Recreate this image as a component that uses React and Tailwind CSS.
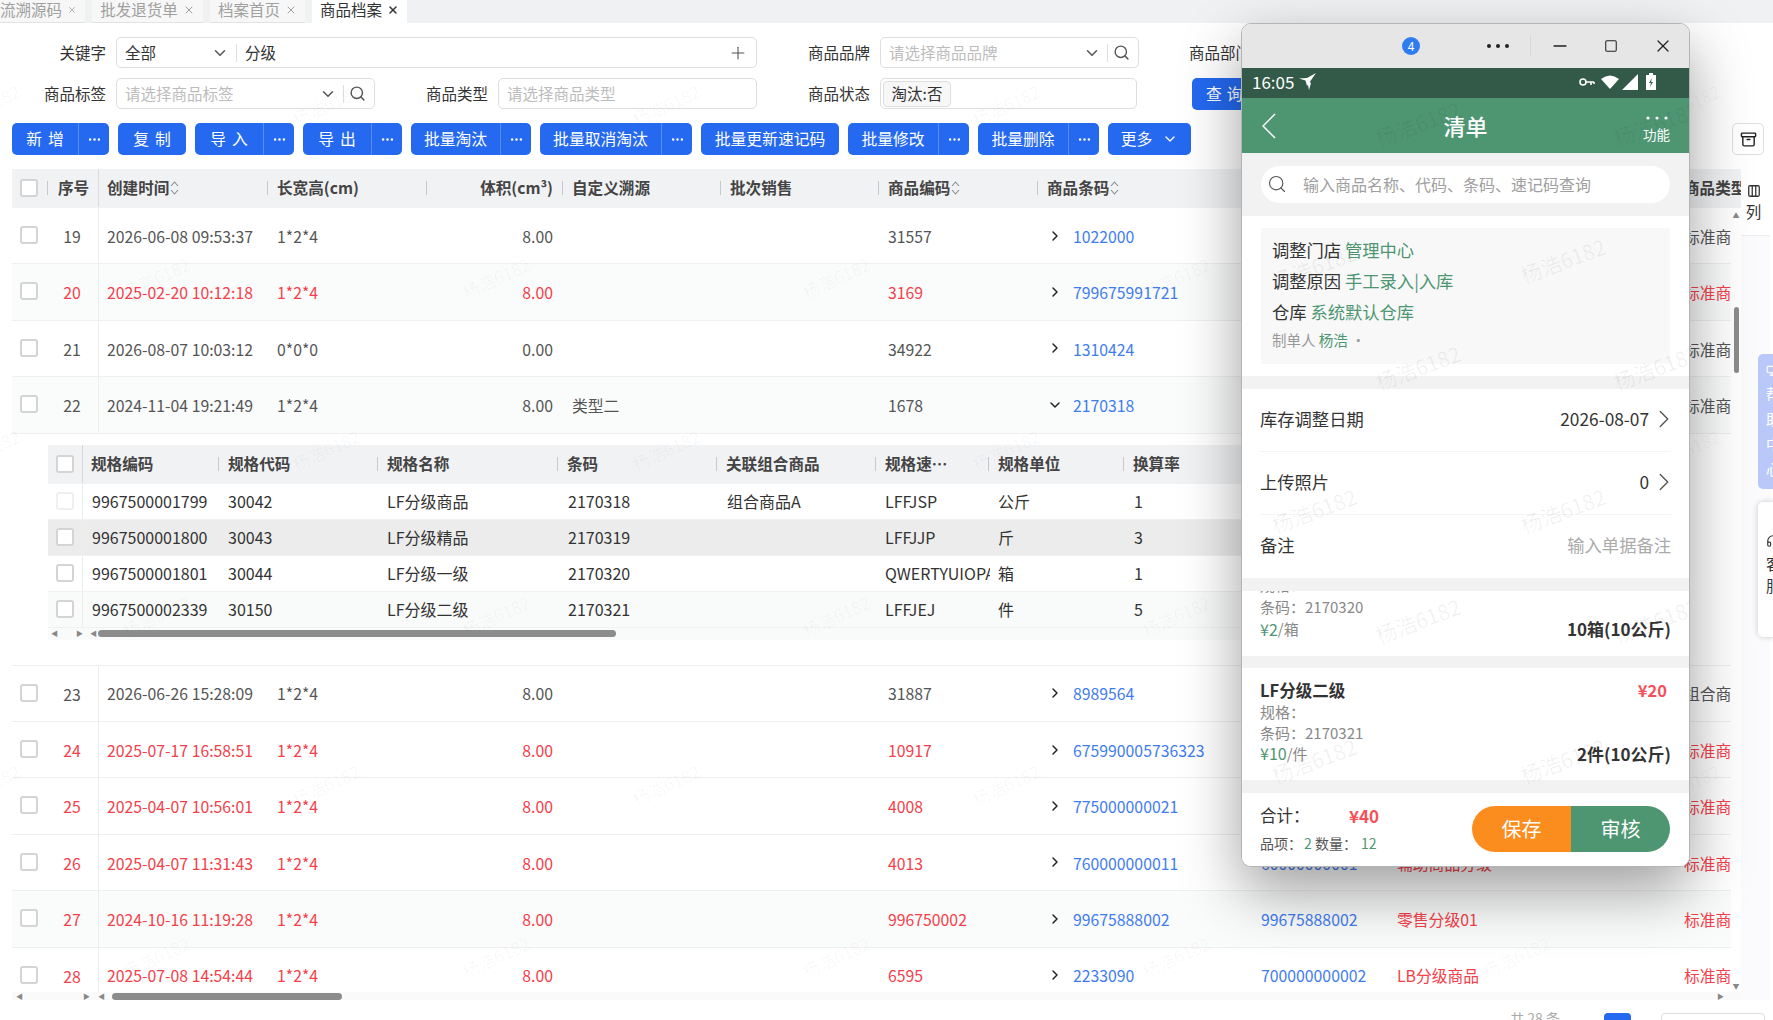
import { ChevronDown, ChevronRight, Search, Plus, Ellipsis, Minus, Square, X, Archive, Columns3, Headphones, MonitorSmartphone } from 'lucide-react';

const font = { fontFamily: '"Noto Sans CJK SC", "Noto Sans", sans-serif' };

const mainCols = 'grid w-max grid-cols-[87px_170px_159px_136px_158px_158px_159px_214px_136px_287px_110px]';
const subCols = 'grid w-[1630px] grid-cols-[35px_137px_159px_180px_159px_159px_113px_135px_553px]';

const rowsTop = [
    { no: 19, time: '2026-06-08 09:53:37', size: '1*2*4', vol: '8.00', custom: '', code: '31557', bar: '1022000', bar2: '', name: '', type: '标准商' },
    { no: 20, red: true, time: '2025-02-20 10:12:18', size: '1*2*4', vol: '8.00', custom: '', code: '3169', bar: '799675991721', bar2: '', name: '', type: '标准商' },
    { no: 21, time: '2026-08-07 10:03:12', size: '0*0*0', vol: '0.00', custom: '', code: '34922', bar: '1310424', bar2: '', name: '', type: '标准商' },
    { no: 22, open: true, time: '2024-11-04 19:21:49', size: '1*2*4', vol: '8.00', custom: '类型二', code: '1678', bar: '2170318', bar2: '', name: '', type: '标准商' },
];

const rowsBottom = [
    { no: 23, time: '2026-06-26 15:28:09', size: '1*2*4', vol: '8.00', custom: '', code: '31887', bar: '8989564', bar2: '', name: '', type: '组合商' },
    { no: 24, red: true, time: '2025-07-17 16:58:51', size: '1*2*4', vol: '8.00', custom: '', code: '10917', bar: '675990005736323', bar2: '', name: '', type: '标准商' },
    { no: 25, red: true, time: '2025-04-07 10:56:01', size: '1*2*4', vol: '8.00', custom: '', code: '4008', bar: '775000000021', bar2: '', name: '', type: '标准商' },
    { no: 26, red: true, time: '2025-04-07 11:31:43', size: '1*2*4', vol: '8.00', custom: '', code: '4013', bar: '760000000011', bar2: '60000000001', name: '辅助商品分级', type: '标准商' },
    { no: 27, red: true, time: '2024-10-16 11:19:28', size: '1*2*4', vol: '8.00', custom: '', code: '996750002', bar: '99675888002', bar2: '99675888002', name: '零售分级01', type: '标准商' },
    { no: 28, red: true, time: '2025-07-08 14:54:44', size: '1*2*4', vol: '8.00', custom: '', code: '6595', bar: '2233090', bar2: '700000000002', name: 'LB分级商品', type: '标准商' },
];

const subRows = [
    { code: '9967500001799', c2: '30042', name: 'LF分级商品', bar: '2170318', combo: '组合商品A', memo: 'LFFJSP', unit: '公斤', rate: '1', bg: 'bg-white', light: true },
    { code: '9967500001800', c2: '30043', name: 'LF分级精品', bar: '2170319', combo: '', memo: 'LFFJJP', unit: '斤', rate: '3', bg: 'bg-[#ececec]' },
    { code: '9967500001801', c2: '30044', name: 'LF分级一级', bar: '2170320', combo: '', memo: 'QWERTYUIOPASD', unit: '箱', rate: '1', bg: 'bg-white' },
    { code: '9967500002339', c2: '30150', name: 'LF分级二级', bar: '2170321', combo: '', memo: 'LFFJEJ', unit: '件', rate: '5', bg: 'bg-[#f9fafa]' },
];

// watermark spots, read off the reference
const pageMarks = [];
[[105, 326], [278, 156], [450, 326], [616, 156], [785, 326], [957, 156]].forEach(([y, start]) => {
    for (let x = start - 340; x < 1773; x += 340) pageMarks.push([x, y]);
});
const phoneMarks = [
    [176, 100], [414, 100], [72, 243], [321, 237], [176, 344], [414, 344],
    [72, 487], [321, 487], [176, 597], [414, 597], [72, 737], [321, 737],
];

const Dots = ({ r, color }) => (
    <svg width="24" height="6" viewBox="0 0 24 6" fill={color}>
        <circle cx="3" cy="3" r={r} />
        <circle cx="12" cy="3" r={r} />
        <circle cx="21" cy="3" r={r} />
    </svg>
);

const Sort = () => (
    <svg width="9" height="16" viewBox="0 0 9 16" className="ml-px shrink-0" fill="none" stroke="#8a8a8a" strokeWidth="1.1">
        <path d="M1 6l3.5-4L8 6" />
        <path d="M1 10l3.5 4L8 10" />
    </svg>
);

const Check = ({ light }) => (
    <span className={`block h-[18px] w-[18px] shrink-0 rounded-[3px] border-2 bg-white ${light ? 'border-[#efefef]' : 'border-[#d4d4d4]'}`} />
);

const Sep = () => <span className="ml-auto h-[14px] w-px shrink-0 bg-[#c9c9c9]" />;

const HeadCell = ({ children, sort, right, sep = true }) => (
    <div className="flex items-center overflow-hidden whitespace-nowrap pl-2 pr-[1px]">
        <span className={`flex items-center ${right ? 'ml-auto pr-[9px]' : ''}`}>
            {children}
            {sort && <Sort />}
        </span>
        {sep && !right && <Sep />}
        {sep && right && <span className="h-[14px] w-px shrink-0 bg-[#c9c9c9]" />}
    </div>
);

const ToolButton = ({ label, width, more, wide }) => (
    <div className="flex h-8 overflow-hidden rounded-[5px] bg-[#2469f0] text-[15.8px] text-white">
        <span className={`flex h-8 items-center justify-center ${width} ${wide ? 'pl-[6px] tracking-[6px]' : ''}`}>{label}</span>
        {more && (
            <span className="flex h-8 w-[31px] items-center justify-center border-l border-white/25">
                <Ellipsis size={15} strokeWidth={2} />
            </span>
        )}
    </div>
);

const Field = ({ placeholder, chevron, search, className, children }) => (
    <div className={`flex h-[31px] items-center rounded-[5px] border border-[#dedede] bg-white ${className}`}>
        {placeholder && <span className="pl-[8px] text-[15.5px] text-[#bcbcbc]">{placeholder}</span>}
        {children}
        {chevron && <ChevronDown size={18} className="ml-auto text-[#555]" />}
        {search && (
            <>
                <span className="ml-[6px] h-[18px] w-px bg-[#dedede]" />
                <Search size={17} className="ml-[5px] mr-[8px] text-[#555]" />
            </>
        )}
    </div>
);

const Label = ({ children, width }) => (
    <span className={`shrink-0 text-right text-[15.5px] text-[#333] ${width}`}>{children}</span>
);

const Row = ({ row, even }) => {
    const tone = row.red ? 'text-[#f5404a]' : 'text-[#555]';
    return (
        <div className={`${mainCols} h-[56.4px] items-center border-b border-[#eef0f0] text-[15.8px] ${even ? 'bg-[#fafbfb]' : 'bg-white'} ${tone}`}>
            <div className="flex h-full items-start border-r border-[#eceeee] pl-2 pt-[18px]">
                <Check />
                <span className="ml-[8px] w-[52px] text-center leading-[22px]">{row.no}</span>
            </div>
            <span className="pl-2 pt-[2px]">{row.time}</span>
            <span className="pl-2 pt-[2px]">{row.size}</span>
            <span className="pr-[11px] pt-[2px] text-right">{row.vol}</span>
            <span className="pl-2 pt-[2px]">{row.custom}</span>
            <span />
            <span className="pl-2 pt-[2px]">{row.code}</span>
            <span className="flex items-center pl-[8px]">
                {row.open
                    ? <ChevronDown size={16} strokeWidth={2.2} className="text-[#222]" />
                    : <ChevronRight size={16} strokeWidth={2.2} className="text-[#222]" />}
                <span className="ml-[10px] pt-[2px] text-[#3f7cf0]">{row.bar}</span>
            </span>
            <span className="pl-2 pt-[2px] text-[#3f7cf0]">{row.bar2}</span>
            <span className="pl-2 pt-[2px]">{row.name}</span>
            <span className="pl-2 pt-[2px]">{row.type}</span>
        </div>
    );
};

const SubTable = () => (
    <div className="h-[232px] border-b border-[#eef0f0] bg-white pl-9 pt-[11px]">
        <div className={`${subCols} h-[39px] items-center bg-[#f1f2f4] pb-[1px] text-[15.6px] font-bold text-[#444]`}>
            <div className="flex h-full items-center border-r border-[#d9d9d9] pl-[8px]"><Check /></div>
            <HeadCell>规格编码</HeadCell>
            <HeadCell>规格代码</HeadCell>
            <HeadCell>规格名称</HeadCell>
            <HeadCell>条码</HeadCell>
            <HeadCell>关联组合商品</HeadCell>
            <HeadCell>规格速…</HeadCell>
            <HeadCell>规格单位</HeadCell>
            <HeadCell sep={false}>换算率</HeadCell>
        </div>
        {subRows.map(r => (
            <div key={r.code} className={`${subCols} h-[36px] items-center border-b border-[#f0f1f1] text-[16px] text-[#333] ${r.bg}`}>
                <div className="flex h-full items-center border-r border-[#eceeee] pl-[8px]"><Check light={r.light} /></div>
                <span className="pl-[9px]">{r.code}</span>
                <span className="pl-2">{r.c2}</span>
                <span className="pl-2">{r.name}</span>
                <span className="pl-[9px]">{r.bar}</span>
                <span className="pl-[9px]">{r.combo}</span>
                <span className="overflow-hidden whitespace-nowrap pl-2">{r.memo}</span>
                <span className="pl-2">{r.unit}</span>
                <span className="pl-[9px]">{r.rate}</span>
            </div>
        ))}
        <div className="flex h-3 w-[1630px] items-center bg-[#f9fafa] text-[7px] leading-none text-[#888]">
            <span className="ml-[3px] w-[25px]">◀</span>
            <span className="w-[14px]">▶</span>
            <span className="w-[8px]">◀</span>
            <span className="h-[7px] w-[518px] rounded-full bg-[#8c8c8c]" />
        </div>
    </div>
);

const Phone = () => (
    <div className="absolute left-[1241px] top-[23px] h-[844px] w-[449px] overflow-hidden rounded-[10px] border border-[#b4b4b4] bg-white shadow-[0_24px_60px_rgba(0,0,0,0.38)]">
        {/* window title bar */}
        <div className="flex h-[44px] items-center bg-[#e6e6e6] text-[#222]">
            <span className="ml-[160px] flex h-[18px] w-[18px] items-center justify-center rounded-full bg-[#2f7cf0] text-[12px] text-white">4</span>
            <span className="ml-[66px] flex"><Dots r={2} color="#222" /></span>
            <span className="ml-[20px] h-[22px] w-px bg-[#d8d8d8]" />
            <Minus size={20} className="ml-[19px]" />
            <Square size={14} strokeWidth={1.8} className="ml-[34px]" />
            <X size={20} strokeWidth={1.5} className="ml-[35px]" />
        </div>
        {/* status bar */}
        <div className="flex h-[30px] items-center bg-[#335a49] pb-[3px] pl-[10px] text-white">
            <span className="text-[17px] leading-none">16:05</span>
            <svg width="18" height="17" viewBox="0 0 18 17" className="ml-[5px]" fill="white">
                <path d="M17 0L8 13 6.5 7.5 0 5.5l8-.5z" />
                <path d="M8 7l2 10 2-7z" />
            </svg>
            <svg width="16" height="10" viewBox="0 0 16 10" className="ml-[262px]" fill="none" stroke="white" strokeWidth="1.6">
                <circle cx="4" cy="5" r="3" />
                <path d="M7 5h8M12 5v3M15 5v2" />
            </svg>
            <svg width="18" height="14" viewBox="0 0 18 14" className="ml-[6px]" fill="white"><path d="M0 4Q9-3 18 4L9 14z" /></svg>
            <svg width="16" height="16" viewBox="0 0 16 16" className="ml-[3px]" fill="white"><path d="M16 0v16H0z" /></svg>
            <svg width="10" height="17" viewBox="0 0 10 17" className="ml-[8px]"><path d="M3 0h4v2h3v15H0V2h3z" fill="white" /><path d="M6 5L3 10h2l-1 4 3-5H5z" fill="#335a49" /></svg>
        </div>
        {/* header */}
        <div className="relative flex h-[55px] items-center justify-center bg-[#4e9672] text-white">
            <svg width="14" height="26" viewBox="0 0 14 26" fill="none" stroke="white" strokeWidth="1.5" className="absolute left-[20px] top-[15px]">
                <path d="M13 1L1 13l12 12" />
            </svg>
            <span className="text-[22px] font-medium">清单</span>
            <div className="absolute right-[19px] top-[17px] flex flex-col items-center">
                <Dots r={1.6} color="white" />
                <span className="mt-[5px] text-[13.5px] leading-[16px]">功能</span>
            </div>
        </div>
        {/* search */}
        <div className="h-[63px] bg-[#f2f2f2] px-[19px] pt-[13px]">
            <div className="flex h-[37px] items-center rounded-full bg-white pb-[2px] pl-[6px]">
                <Search size={20} strokeWidth={1.4} className="text-[#555]" />
                <span className="ml-[16px] text-[16px] text-[#a0a0a0]">输入商品名称、代码、条码、速记码查询</span>
            </div>
        </div>
        {/* document info */}
        <div className="bg-white px-[19px] py-[12px]">
            <div className="h-[136px] bg-[#f8f8f8] pl-[11px] pt-[6px] text-[17.3px] leading-[31px] text-[#333]">
                <div>调整门店 <span className="text-[#4e9672]">管理中心</span></div>
                <div>调整原因 <span className="text-[#4e9672]">手工录入|入库</span></div>
                <div>仓库 <span className="text-[#4e9672]">系统默认仓库</span></div>
                <div className="text-[14.5px] leading-[26px] text-[#999]">制单人 <span className="text-[#4e9672]">杨浩</span> ·</div>
            </div>
        </div>
        <div className="h-[13px] bg-[#f2f2f2]" />
        {/* form rows */}
        <div className="bg-white px-[18px] text-[17.3px] text-[#333]">
            <div className="flex h-[63px] items-center border-b border-[#f4f4f4] pb-[2px]">
                <span>库存调整日期</span>
                <span className="ml-auto">2026-08-07</span>
                <ChevronRight size={30} strokeWidth={1.1} className="-mr-[8px] text-[#555]" />
            </div>
            <div className="flex h-[63px] items-center border-b border-[#f4f4f4] pb-[2px]">
                <span>上传照片</span>
                <span className="ml-auto">0</span>
                <ChevronRight size={30} strokeWidth={1.1} className="-mr-[8px] text-[#555]" />
            </div>
            <div className="flex h-[63px] items-center pb-[3px]">
                <span>备注</span>
                <span className="ml-auto text-[#aaa]">输入单据备注</span>
            </div>
        </div>
        <div className="h-[13px] bg-[#f2f2f2]" />
        {/* list, first card scrolled out */}
        <div className="flex h-[65px] flex-col justify-end overflow-hidden bg-white px-[18px] pb-[16px] text-[15px] leading-[22px] text-[#888]">
            <div>规格：</div>
            <div>条码：2170320</div>
            <div className="flex items-center">
                <span className="text-[16px] text-[#4e9672]">¥2</span><span>/箱</span>
                <span className="ml-auto text-[17px] font-bold text-[#333]">10箱(10公斤)</span>
            </div>
        </div>
        <div className="h-[12px] bg-[#f2f2f2]" />
        <div className="h-[112px] bg-white px-[18px] pt-[12px] text-[15px] leading-[21px] text-[#888]">
            <div className="flex items-center text-[16.5px] font-bold text-[#333]">
                <span>LF分级二级</span>
                <span className="ml-auto pr-[4px] text-[#f5505a]">¥20</span>
            </div>
            <div>规格：</div>
            <div>条码：2170321</div>
            <div className="flex items-center">
                <span className="text-[16px] text-[#4e9672]">¥10</span><span>/件</span>
                <span className="ml-auto text-[17px] font-bold text-[#333]">2件(10公斤)</span>
            </div>
        </div>
        <div className="h-[13px] bg-[#f2f2f2]" />
        {/* footer */}
        <div className="flex h-[75px] items-start bg-white pl-[18px] pr-[19px] pt-[13px]">
            <div className="-mt-[3px]">
                <div className="flex items-center text-[16.5px] text-[#333]">
                    <span className="w-[89px]">合计：</span>
                    <span className="text-[17px] font-bold text-[#f5505a]">¥40</span>
                </div>
                <div className="mt-[4px] text-[14px] text-[#555]">
                    品项：<span className="ml-[2px] text-[#4e9672]">2</span> 数量：<span className="ml-[4px] text-[#4e9672]">12</span>
                </div>
            </div>
            <div className="ml-auto flex h-[46px] overflow-hidden rounded-full text-[20px] text-white">
                <span className="flex w-[99px] items-center justify-center bg-[#fb8c1e]">保存</span>
                <span className="flex w-[99px] items-center justify-center bg-[#4e9672]">审核</span>
            </div>
        </div>
        {/* watermark */}
        <div className="pointer-events-none absolute inset-0">
            {phoneMarks.map(([x, y]) => (
                <span key={`${x}-${y}`} className="absolute -translate-x-1/2 -translate-y-1/2 -rotate-[20deg] whitespace-nowrap text-[21px] text-black/[0.06]" style={{ left: x, top: y }}>杨浩6182</span>
            ))}
        </div>
    </div>
);

const App = () => {
    return (
        <div className="relative h-[1020px] w-[1773px] overflow-hidden bg-white" style={font}>
            {/* tabs */}
            <div className="flex h-[23px] items-stretch gap-[7px] bg-[#f0f1f3] pb-0 text-[15.5px] text-[#a0a0a0]">
                <span className="flex w-[85px] items-center justify-end gap-[5px] overflow-hidden whitespace-nowrap border-b border-[#e2e2e2] bg-[#f7f7f7] pb-[3px] pr-[8px]">流溯源码 <X size={12} /></span>
                <span className="flex w-[111px] items-center justify-center gap-[5px] border-b border-[#e2e2e2] bg-[#f7f7f7] pb-[3px]">批发退货单 <X size={12} /></span>
                <span className="flex w-[95px] items-center justify-center gap-[5px] border-b border-[#e2e2e2] bg-[#f7f7f7] pb-[3px]">档案首页 <X size={12} /></span>
                <span className="flex w-[95px] items-center justify-center gap-[5px] bg-white pb-[3px] text-[#333]">商品档案 <X size={12} strokeWidth={3} /></span>
            </div>

            {/* filters */}
            <div className="mt-[14px] flex h-[31px] items-center">
                <Label width="w-[106px]">关键字</Label>
                <Field className="ml-[10px] w-[641px]">
                    <span className="pl-[8px] text-[15.5px] text-[#333]">全部</span>
                    <ChevronDown size={18} className="ml-[55px] text-[#555]" />
                    <span className="ml-[7px] h-[18px] w-px bg-[#dedede]" />
                    <span className="pl-[8px] text-[15.5px] text-[#333]">分级</span>
                    <Plus size={20} strokeWidth={1.3} className="ml-auto mr-[8px] text-[#555]" />
                </Field>
                <Label width="w-[113px]">商品品牌</Label>
                <Field placeholder="请选择商品品牌" chevron search className="ml-[10px] w-[259px]" />
                <span className="ml-[50px] whitespace-nowrap text-[15.5px] text-[#333]">商品部门</span>
            </div>
            <div className="mt-[10px] flex h-[31px] items-center">
                <Label width="w-[106px]">商品标签</Label>
                <Field placeholder="请选择商品标签" chevron search className="ml-[10px] w-[259px]" />
                <Label width="w-[113px]">商品类型</Label>
                <Field placeholder="请选择商品类型" className="ml-[10px] w-[259px]" />
                <Label width="w-[113px]">商品状态</Label>
                <Field className="ml-[10px] w-[257px] pl-[2px]">
                    <span className="flex h-[26px] w-[68px] items-center justify-center rounded-[4px] border border-[#dedede] bg-[#f7f7f7] text-[15.5px] text-[#333]">淘汰:否</span>
                </Field>
                <span className="ml-[55px] flex h-8 w-[100px] items-center rounded-[5px] bg-[#2469f0] pl-[14px] text-[15.8px] tracking-[5px] text-white">查询</span>
            </div>

            {/* toolbar */}
            <div className="mt-[14px] flex h-8 items-center gap-[9px] pl-3">
                <ToolButton label="新增" width="w-[66px]" more wide />
                <ToolButton label="复制" width="w-[68px]" wide />
                <ToolButton label="导入" width="w-[68px]" more wide />
                <ToolButton label="导出" width="w-[68px]" more wide />
                <ToolButton label="批量淘汰" width="w-[89px]" more />
                <ToolButton label="批量取消淘汰" width="w-[121px]" more />
                <ToolButton label="批量更新速记码" width="w-[138px]" />
                <ToolButton label="批量修改" width="w-[90px]" more />
                <ToolButton label="批量删除" width="w-[90px]" more />
                <div className="flex h-8 w-[83px] items-center justify-center gap-[10px] rounded-[5px] bg-[#2469f0] text-[15.8px] text-white">
                    更多 <ChevronDown size={16} />
                </div>
                <span className="ml-auto mr-[9px] flex h-8 w-8 items-center justify-center rounded-[5px] border border-[#dedede] bg-white">
                    <Archive size={17} strokeWidth={2} className="text-[#222]" />
                </span>
            </div>

            {/* table */}
            <div className="mt-[14px] flex pl-3">
                <div className="w-[1729px]">
                    <div className="h-[39px] overflow-hidden bg-[#f1f2f4]">
                        <div className={`${mainCols} h-[39px] items-center pb-[1px] text-[15.6px] font-bold text-[#444]`}>
                            <div className="flex h-full items-center border-r border-[#dcdcdc] pl-2">
                                <Check />
                                <span className="ml-[9px] h-[14px] w-px bg-[#c9c9c9]" />
                                <span className="ml-[10px]">序号</span>
                            </div>
                            <HeadCell sort>创建时间</HeadCell>
                            <HeadCell>长宽高(cm)</HeadCell>
                            <HeadCell right>体积(cm³)</HeadCell>
                            <HeadCell>自定义溯源</HeadCell>
                            <HeadCell>批次销售</HeadCell>
                            <HeadCell sort>商品编码</HeadCell>
                            <HeadCell sort>商品条码</HeadCell>
                            <HeadCell sep={false}>条码</HeadCell>
                            <HeadCell sep={false}>商品名称</HeadCell>
                            <HeadCell sep={false}>商品类型</HeadCell>
                        </div>
                    </div>
                    <div className="flex h-[784px]">
                        <div className="w-[1719px] overflow-hidden">
                            {rowsTop.map((r, i) => <Row key={r.no} row={r} even={i % 2 === 1} />)}
                            <SubTable />
                            {rowsBottom.map((r, i) => <Row key={r.no} row={r} even={i % 2 === 0 && r.no === 27} />)}
                        </div>
                        {/* vertical scrollbar */}
                        <div className="flex w-[10px] flex-col items-center bg-white">
                            <span className="mt-[4px] text-[7px] leading-none text-[#888]">▲</span>
                            <span className="mt-[88px] h-[66px] w-[5px] rounded-full bg-[#8c8c8c]" />
                            <span className="mt-auto mb-[2px] text-[7px] leading-none text-[#888]">▼</span>
                        </div>
                    </div>
                    {/* horizontal scrollbar */}
                    <div className="flex h-[8px] items-center bg-[#fafafa]">
                        <span className="ml-[4px] w-[71px] text-[7px] leading-none text-[#888]">◀<span className="ml-[60px]">▶</span></span>
                        <span className="ml-[11px] text-[7px] leading-none text-[#888]">◀</span>
                        <span className="ml-[7px] h-[7px] w-[230px] rounded-full bg-[#8c8c8c]" />
                        <span className="ml-[1375px] text-[7px] leading-none text-[#888]">▶</span>
                    </div>
                </div>
                {/* column picker */}
                <div className="w-[29px] bg-[#fbfbfd]">
                    <div className="flex h-[67px] flex-col items-center border-b border-[#eeeeee] bg-white pr-[4px] pt-[15px] text-[15.5px] text-[#333]">
                        <Columns3 size={14} strokeWidth={2.2} />
                        <span className="mt-[2px]">列</span>
                    </div>
                </div>
            </div>

            {/* pagination, cut off by the window */}
            <div className="mt-[13px] flex items-start justify-end pr-[8px] text-[14px] text-[#aaa]">
                <span className="-mt-[5px]">共 28 条</span>
                <span className="ml-[44px] h-7 w-[27px] rounded-[4px] bg-[#2469f0]" />
                <span className="ml-[30px] h-7 w-[104px] rounded-[4px] border border-[#dedede]" />
            </div>

            {/* side tabs */}
            <div className="absolute left-[1758px] top-[354px] flex h-[135px] w-[30px] flex-col rounded-l-[5px] bg-[#b9c8f8] pl-[8px] pt-[10px] text-[15px] leading-[25px] text-white">
                <MonitorSmartphone size={14} className="mb-[3px]" />
                <span>帮</span>
                <span>助</span>
                <span>中</span>
                <span>心</span>
            </div>
            <div className="absolute left-[1758px] top-[502px] flex h-[135px] w-[30px] flex-col items-start rounded-l-[5px] bg-white pl-[8px] pt-[32px] text-[15.5px] leading-[22px] text-[#333] shadow-[0_0_6px_rgba(0,0,0,0.2)]">
                <Headphones size={14} />
                <span className="mt-[4px]">客</span>
                <span>服</span>
            </div>

            {/* watermark */}
            <div className="pointer-events-none absolute inset-0">
                {pageMarks.map(([x, y]) => (
                    <span key={`${x}-${y}`} className="absolute -translate-x-1/2 -translate-y-1/2 -rotate-[25deg] whitespace-nowrap text-[17px] text-black/[0.035]" style={{ left: x, top: y }}>杨浩6182</span>
                ))}
            </div>

            <Phone />
        </div>
    );
};

export default App;
